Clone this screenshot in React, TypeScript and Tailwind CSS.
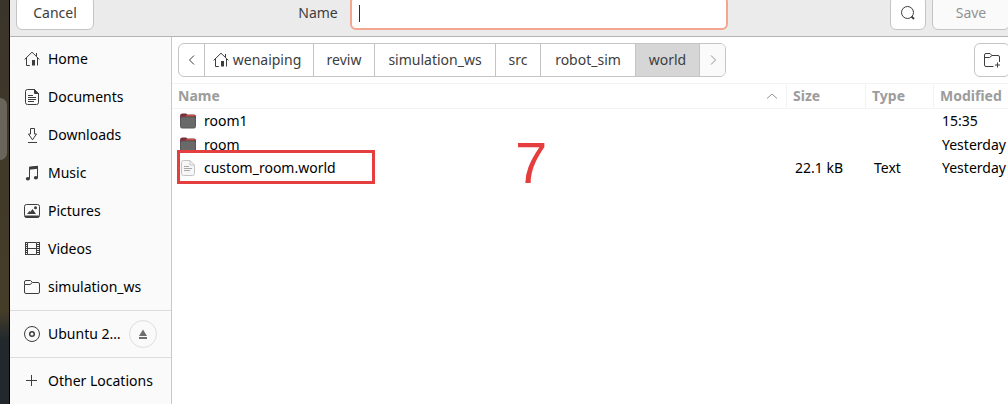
import React, { useState } from 'react';

type IconProps = { className?: string };

const HomeIcon = ({ className = 'text-[#3d3d3d]' }: IconProps) => (
  <svg viewBox="0 0 16 16" className={`size-4 shrink-0 ${className}`} fill="none" stroke="currentColor" aria-hidden="true">
    <path d="M.6 8.4 8 1.2l7.4 7.2M2.5 7v7.500h3.300M13.500 7v7.500M12.500 2v3" />
    <path d="M8 9h3v5.500H8z" fill="currentColor" stroke="none" />
  </svg>
);

const DocumentIcon = () => (
  <svg viewBox="0 0 16 16" className="size-4 shrink-0" fill="none" stroke="#3d3d3d" aria-hidden="true">
    <path d="M10.5.5H3.500a2 2 0 0 0-2 2v11a2 2 0 0 0 2 2h9a2 2 0 0 0 2-2V4.500z" />
    <path d="M10.500.500v4h4z" fill="#3d3d3d" />
    <path d="M4 6.500h5M4 8.500h8M4 10.500h8M4 12.500h6" />
  </svg>
);

const DownloadIcon = () => (
  <svg viewBox="0 0 16 16" className="size-4 shrink-0" fill="none" stroke="#3d3d3d" aria-hidden="true">
    <path d="M6.500 1.500h4v5.500h2L8.500 12.800 4.500 7h2zM4 15.500h9" />
  </svg>
);

const MusicIcon = () => (
  <svg viewBox="0 0 16 16" className="size-4 shrink-0" fill="none" stroke="#3d3d3d" aria-hidden="true">
    <path d="M5.500 13.500V2.500l8-1v11" />
    <path d="M5 1.800l9-1v3l-9 1z" fill="#3d3d3d" stroke="none" />
    <ellipse cx="3.900" cy="13.800" rx="2.100" ry="1.800" fill="#3d3d3d" stroke="none" />
    <ellipse cx="11.900" cy="12.800" rx="2.100" ry="1.800" fill="#3d3d3d" stroke="none" />
  </svg>
);

const PictureIcon = () => (
  <svg viewBox="0 0 16 16" className="size-4 shrink-0" fill="none" stroke="#3d3d3d" aria-hidden="true">
    <rect x=".5" y="1.500" width="15" height="13" rx="2" />
    <path d="M1 13.500h14" strokeWidth="2" />
    <path d="M3 11l2.500-3 1 .8L8.500 6l3.500 5z" fill="#3d3d3d" stroke="none" />
    <circle cx="11.500" cy="4.800" r="1.500" fill="#3d3d3d" stroke="none" />
  </svg>
);

const VideoIcon = () => (
  <svg viewBox="0 0 16 16" className="size-4 shrink-0" fill="none" stroke="#3d3d3d" aria-hidden="true">
    <path d="M3.500 1.500h9v12h-9zM3.500 7.500h9" />
    <path d="M1.500 1v13M15.500 1v13" />
    <path d="M2.500 1v13M14 1v13" strokeWidth="2" strokeDasharray="1 1" />
  </svg>
);

const FolderIcon = () => (
  <svg viewBox="0 0 16 16" className="size-4 shrink-0" fill="none" stroke="#3d3d3d" aria-hidden="true">
    <path d="M.5 5V3A1.500 1.500 0 0 1 2 1.500h4.500L8.500 3.500H14A1.500 1.500 0 0 1 15.500 5v8a1.500 1.500 0 0 1-1.500 1.500H2A1.500 1.500 0 0 1 .5 13V5.500H6l2.500-2" />
  </svg>
);

const DiscIcon = () => (
  <svg viewBox="0 0 16 16" className="size-4 shrink-0" fill="none" stroke="#3d3d3d" aria-hidden="true">
    <circle cx="8" cy="8" r="7.500" />
    <circle cx="8" cy="8" r="2.300" strokeWidth="1.500" />
  </svg>
);

const PlusIcon = () => (
  <svg viewBox="0 0 16 16" className="size-4 shrink-0" fill="none" stroke="#3d3d3d" aria-hidden="true">
    <path d="M7.500 2v11M2 7.500h11" />
  </svg>
);

const EjectIcon = () => (
  <svg viewBox="0 0 16 16" className="size-4" fill="#6e6e6e" aria-hidden="true">
    <path d="M8 3.500 12 10H4zM4 11h8v2H4z" />
  </svg>
);

const SearchIcon = () => (
  <svg viewBox="0 0 16 16" className="size-4" fill="none" stroke="#3d3d3d" aria-hidden="true">
    <circle cx="7.500" cy="7.500" r="6" />
    <path d="M11.500 11.500 14 14" strokeWidth="1.800" />
  </svg>
);

const NewFolderIcon = () => (
  <svg viewBox="0 0 18 16" className="h-4 w-[18px] shrink-0" fill="none" stroke="#3d3d3d" aria-hidden="true">
    <path d="M10.500 14.500H3A1.500 1.500 0 0 1 1.500 13V3A1.500 1.500 0 0 1 3 1.500h4l2 2h6A1.500 1.500 0 0 1 16.500 5v5M1.500 5.500h5l2.500-2M14.500 10.500v5M12 13h5" />
  </svg>
);

const Chevron = ({ d, className }: { d: string; className: string }) => (
  <svg viewBox="0 0 16 16" className={`size-4 ${className}`} fill="none" stroke="currentColor" aria-hidden="true">
    <path d={d} />
  </svg>
);

const FolderFileIcon = () => (
  <svg viewBox="0 0 16 16" className="size-4 shrink-0" aria-hidden="true">
    <path d="M0 3Q0 .5 2 .5h4L7.500 1.500H14q2 0 2 2v6H0z" fill="#7d2f40" />
    <path d="M7 2h7q1.500 0 1.800 1.500H5z" fill="#c9503a" />
    <rect x=".5" y="4" width="15" height="11" rx="1.500" fill="#696969" stroke="#585858" />
  </svg>
);

const TextFileIcon = () => (
  <svg viewBox="0 0 16 16" className="size-4 shrink-0" fill="none" stroke="#c4c4c4" aria-hidden="true">
    <path d="M10 .5H3.500a2 2 0 0 0-2 2v11a2 2 0 0 0 2 2h9a2 2 0 0 0 2-2V5z" fill="#f6f6f6" />
    <path d="M10 .5V5h4.500" />
    <path d="M4 6.500h5M4 8.500h8M4 10.500h6" stroke="#a8a8a8" />
  </svg>
);

const places = [
  { name: 'Home', icon: <HomeIcon /> },
  { name: 'Documents', icon: <DocumentIcon /> },
  { name: 'Downloads', icon: <DownloadIcon /> },
  { name: 'Music', icon: <MusicIcon /> },
  { name: 'Pictures', icon: <PictureIcon /> },
  { name: 'Videos', icon: <VideoIcon /> },
  { name: 'simulation_ws', icon: <FolderIcon /> },
];

const crumbs = [
  { name: 'wenaiping', width: 'w-[109px] pr-1' },
  { name: 'reviw', width: 'w-[61px]' },
  { name: 'simulation_ws', width: 'w-[121px]' },
  { name: 'src', width: 'w-[45px]' },
  { name: 'robot_sim', width: 'w-[95px]' },
  { name: 'world', width: 'w-16' },
];

const files = [
  { name: 'room1', folder: true, size: '', type: '', modified: '15:35' },
  { name: 'room', folder: true, size: '', type: '', modified: 'Yesterday' },
  { name: 'custom_room.world', folder: false, size: '22.1 kB', type: 'Text', modified: 'Yesterday' },
];

const Place = ({ name, icon }: { name: string; icon: React.ReactNode }) => (
  <button type="button" className="flex h-[38px] min-w-0 flex-1 items-center gap-2 pl-3.5 text-left whitespace-nowrap">
    {icon}
    {name}
  </button>
);

export default function App() {
  const [fileName, setFileName] = useState('');
  const [current, setCurrent] = useState('world');

  return (
    <div className="flex min-h-screen overflow-hidden bg-white font-['Noto_Sans',sans-serif] text-sm leading-5 text-black">
      {/* Strip of desktop left of the dialog */}
      <div className="w-2.5 shrink-0 border-r border-black bg-linear-to-b from-[#3b342a] via-[#463d29] via-77% to-[#22282b] to-84%">
        <div className="mt-[98px] h-[62px] w-[7px] rounded-r-lg bg-[#69655b]" />
      </div>

      <div className="-mr-2 flex min-w-0 flex-1 flex-col">
        <header className="grid grid-cols-[1fr_auto_1fr] overflow-hidden border-b border-[#b4b4b4] bg-[#ebebeb] px-1.5 pb-1.5 text-[#3d3d3d]">
          <button type="button" className="-mt-1 h-[34px] w-[78px] rounded-md border border-[#c4c4c4] bg-white">
            Cancel
          </button>
          <div className="-mt-1 flex items-center gap-3">
            <label htmlFor="file-name">Name</label>
            <div className="flex h-[34px] w-[378px] items-center rounded-md border-2 border-[#f4a58d] bg-white pl-[7px]">
              <span className="h-[17px] w-px bg-[#2d2d2d]" />
              <input
                id="file-name"
                className="min-w-0 flex-1 outline-none"
                value={fileName}
                onChange={(e) => setFileName(e.target.value)}
              />
            </div>
          </div>
          <div className="-mt-1 flex justify-end gap-1.5">
            <button type="button" aria-label="Search" className="flex h-[34px] w-9 items-center justify-center rounded-md border border-[#c4c4c4] bg-white">
              <SearchIcon />
            </button>
            <button type="button" disabled className="h-[34px] w-[78px] rounded-md border border-[#c4c4c4] bg-[#fafafa] text-[#929292]">
              Save
            </button>
          </div>
        </header>

        <div className="flex flex-1">
          <nav className="w-[162px] shrink-0 border-r border-[#c8c8c8] bg-[#fafafa]">
            <div className="flex flex-col border-b border-[#dcdcdc] pt-[3px] pb-1">
              {places.map((p) => (
                <div key={p.name} className="flex">
                  <Place name={p.name} icon={p.icon} />
                </div>
              ))}
            </div>
            <div className="flex items-center border-b border-[#dcdcdc] py-1 pr-3.5">
              <Place name="Ubuntu 2…" icon={<DiscIcon />} />
              <button type="button" aria-label="Eject" className="flex size-7 items-center justify-center rounded-full border border-[#dedede]">
                <EjectIcon />
              </button>
            </div>
            <div className="flex py-1">
              <Place name="Other Locations" icon={<PlusIcon />} />
            </div>
          </nav>

          <main className="min-w-0 flex-1">
            <div className="flex items-center justify-between p-1.5">
              <div className="flex h-[34px] items-stretch divide-x divide-[#c4c4c4] overflow-hidden rounded-md border border-[#c4c4c4] text-[#3d3d3d]">
                <button type="button" aria-label="Back" className="flex w-[26px] items-center justify-center">
                  <Chevron d="M10 3.500 5.500 8l4.500 4.500" className="text-[#3d3d3d]" />
                </button>
                {crumbs.map((c) => (
                  <button
                    type="button"
                    key={c.name}
                    onClick={() => setCurrent(c.name)}
                    className={`flex items-center justify-center gap-1 ${c.width} ${current === c.name ? 'bg-[#d6d6d6]' : 'bg-white'}`}
                  >
                    {c.name === 'wenaiping' && <HomeIcon />}
                    {c.name}
                  </button>
                ))}
                <button type="button" disabled aria-label="Forward" className="flex w-[25px] items-center justify-center bg-[#fafafa]">
                  <Chevron d="M6 3.500 10.500 8 6 12.500" className="text-[#929292]" />
                </button>
              </div>
              <button type="button" aria-label="New folder" className="flex h-[34px] w-9 items-center justify-center rounded-md border border-[#c4c4c4] bg-white">
                <NewFolderIcon />
              </button>
            </div>

            <div className="relative">
              <table className="w-full table-fixed border-separate border-spacing-0 whitespace-nowrap">
                <thead className="text-left text-[#9c9c9c]">
                  <tr className="h-[26px]">
                    <th className="border-y border-r border-[#f3f3f3] px-1.5">
                      <div className="flex items-center justify-between">
                        Name
                        <Chevron d="M3 10.500 8 6l5 4.500" className="text-[#929292]" />
                      </div>
                    </th>
                    <th className="w-[79px] border-y border-r border-[#f3f3f3] pl-1.5">Size</th>
                    <th className="w-[68px] border-y border-r border-[#f3f3f3] pl-1.5">Type</th>
                    <th className="w-[82px] border-y border-[#f3f3f3] pl-1.5">Modified</th>
                  </tr>
                </thead>
                <tbody>
                  {files.map((f) => (
                    <tr key={f.name} className="h-6 last:h-[22px]">
                      <td className="pl-2">
                        <div className="flex items-center gap-2">
                          {f.folder ? <FolderFileIcon /> : <TextFileIcon />}
                          {f.name}
                        </div>
                      </td>
                      <td className="pl-2">{f.size}</td>
                      <td className="pl-2">{f.type}</td>
                      <td className="pl-2">{f.modified}</td>
                    </tr>
                  ))}
                </tbody>
              </table>

              {/* Step annotation drawn over the list */}
              <div className="pointer-events-none absolute top-[67px] left-[5px] h-[34px] w-[198px] border-3 border-[#e53e3e]" />
              <span className="pointer-events-none absolute top-[51px] left-[343px] font-['Liberation_Sans',sans-serif] text-[58px] leading-[58px] text-[#e53e3e]">
                7
              </span>
            </div>
          </main>
        </div>
      </div>
    </div>
  );
}
